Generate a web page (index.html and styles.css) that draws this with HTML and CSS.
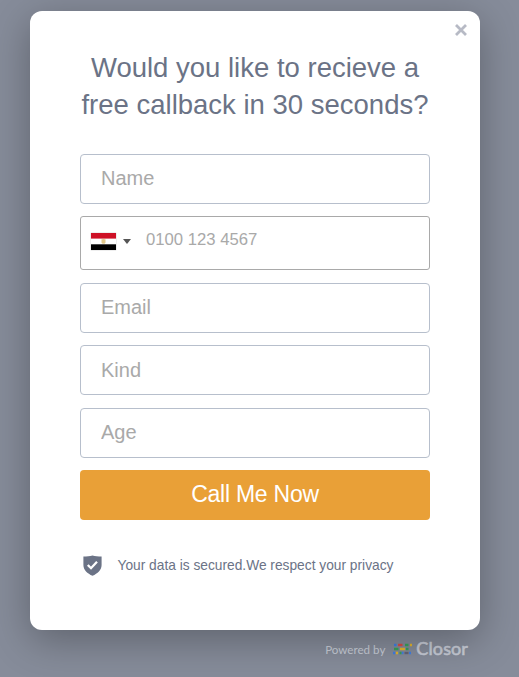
FILE: index.html
```html
<!DOCTYPE html>
<html lang="en">
<head>
<meta charset="utf-8">
<title>Callback request</title>
<link rel="stylesheet" href="styles.css">
</head>
<body>
<main class="card">
  <button class="close" type="button" aria-label="Close">
    <svg width="12" height="12" viewBox="0 0 12 12"><path d="M1 1 11 11M11 1 1 11"/></svg>
  </button>
  <h1 class="title">Would you like to recieve a<br>free callback in 30 seconds?</h1>
  <form class="form">
    <input class="field name" type="text" placeholder="Name">
    <div class="phone">
      <svg class="flag" width="25" height="17" viewBox="0 0 25 17">
        <rect width="25" height="17" fill="#fff"/>
        <rect width="25" height="5.6" fill="#ce1126"/>
        <rect y="11.3" width="25" height="5.7" fill="#000"/>
        <path d="M10.500 6.300h1l1-.3 1 .3h1v3.500l-1 1h-2l-1-1z" fill="#e3c98c"/>
      </svg>
      <span class="caret"></span>
      <input class="number" type="tel" placeholder="0100 123 4567">
    </div>
    <input class="field" type="text" placeholder="Email">
    <input class="field" type="text" placeholder="Kind">
    <input class="field" type="text" placeholder="Age">
    <button class="submit" type="button">Call Me Now</button>
  </form>
  <div class="privacy">
    <svg width="19" height="21" viewBox="0 0 19 21">
      <path d="M9.500.4C7 1.100 3.800 1.500.4 1.500v8.500c0 5 4 8.500 9.100 10.800 5.100-2.300 9.100-5.800 9.100-10.800V1.500C15.200 1.500 12 1.100 9.500.4z" fill="#6b7386"/>
      <path d="M4.800 10l3.200 3.200 6-6.400" fill="none" stroke="#fff" stroke-width="2.300"/>
    </svg>
    <span>Your data is secured.We respect your privacy</span>
  </div>
</main>
<footer class="powered">
  <span class="by">Powered by</span>
  <svg class="mark" width="19" height="12" viewBox="0 0 19 12" fill="none" stroke-width="2.400">
    <path d="M1 2h2.500M0 10h2M8.500 10h2M16 10h2" stroke="#3f7fe8"/>
    <path d="M5 2h4.500" stroke="#dc4b45"/>
    <path d="M12 2h3.500M1 6h4.500M13 6h2.500M6.500 10h2" stroke="#37a35a"/>
    <path d="M17 2h2M7 6h5M3 10h2" stroke="#e5b52c"/>
    <path d="M11.500 10h4" stroke="#666577"/>
  </svg>
  <span class="brand">Closor</span>
</footer>
</body>
</html>
```
FILE: styles.css
```css
* { box-sizing: border-box; }
body {
  margin: 0;
  height: 677px;
  padding: 11px 39px 0 30px;
  overflow: hidden;
  background: #868c9a;
  font-family: "Liberation Sans", Arial, sans-serif;
}
.card {
  position: relative;
  height: 619px;
  padding: 38px 50px 0;
  border-radius: 12px;
  background: #fff;
  box-shadow: 0 10px 40px rgba(0, 0, 0, .3);
}
.close {
  position: absolute;
  top: 12px;
  right: 12px;
  width: 13px;
  height: 13px;
  padding: 0;
  border: 0;
  background: none;
}
.close svg { display: block; fill: none; stroke: #b7bac5; stroke-width: 2.8; }
.title {
  margin: 0 -10px 31px;
  color: #6b7386;
  font-size: 27.5px;
  font-weight: 400;
  line-height: 37px;
  text-align: center;
  white-space: nowrap;
}
.form { display: flex; flex-direction: column; gap: 12.4px; }
.field {
  height: 50px;
  margin: 0;
  padding: 0 20px;
  border: 1px solid #b7bfcc;
  border-radius: 4px;
  background: #fff;
  font: 20px "Liberation Sans", Arial, sans-serif;
}
.name { padding-bottom: 2px; }
.field::placeholder, .number::placeholder { color: #a9a9a9; opacity: 1; }
.phone {
  display: flex;
  align-items: center;
  height: 54px;
  padding-left: 10px;
  border: 1px solid #a9a9a9;
  border-radius: 3px;
}
.flag { margin-top: -3px; box-shadow: 0 0 1px #999; }
.caret {
  margin: -3px 15px 0 7px;
  border: 4px solid transparent;
  border-top: 5px solid #555;
  border-bottom: 0;
}
.number {
  width: 240px;
  height: 40px;
  margin-top: -6px;
  padding: 0;
  border: 0;
  background: none;
  font: 16.700px "Liberation Sans", Arial, sans-serif;
}
.submit {
  height: 50px;
  padding: 0;
  border: 0;
  border-radius: 4px;
  background: #e9a037;
  color: #fff;
  font: 23px "Liberation Sans", Arial, sans-serif;
  letter-spacing: -.25px;
}
.privacy {
  display: flex;
  align-items: center;
  gap: 15.500px;
  margin: 35px 0 0 3px;
  color: #6b7386;
  font-size: 13.750px;
  white-space: nowrap;
}
.powered {
  display: flex;
  align-items: center;
  justify-content: flex-end;
  height: 36px;
  padding-right: 12px;
  color: #c8ccd7;
  font-family: Lato, sans-serif;
}
.by { font-size: 11.600px; padding-top: 2px; }
.mark { margin: 2px 4px 0 8px; }
.brand {
  font-size: 18px;
  font-weight: 400;
  letter-spacing: .1px;
  -webkit-text-stroke: .6px #c8ccd7;
}
```
